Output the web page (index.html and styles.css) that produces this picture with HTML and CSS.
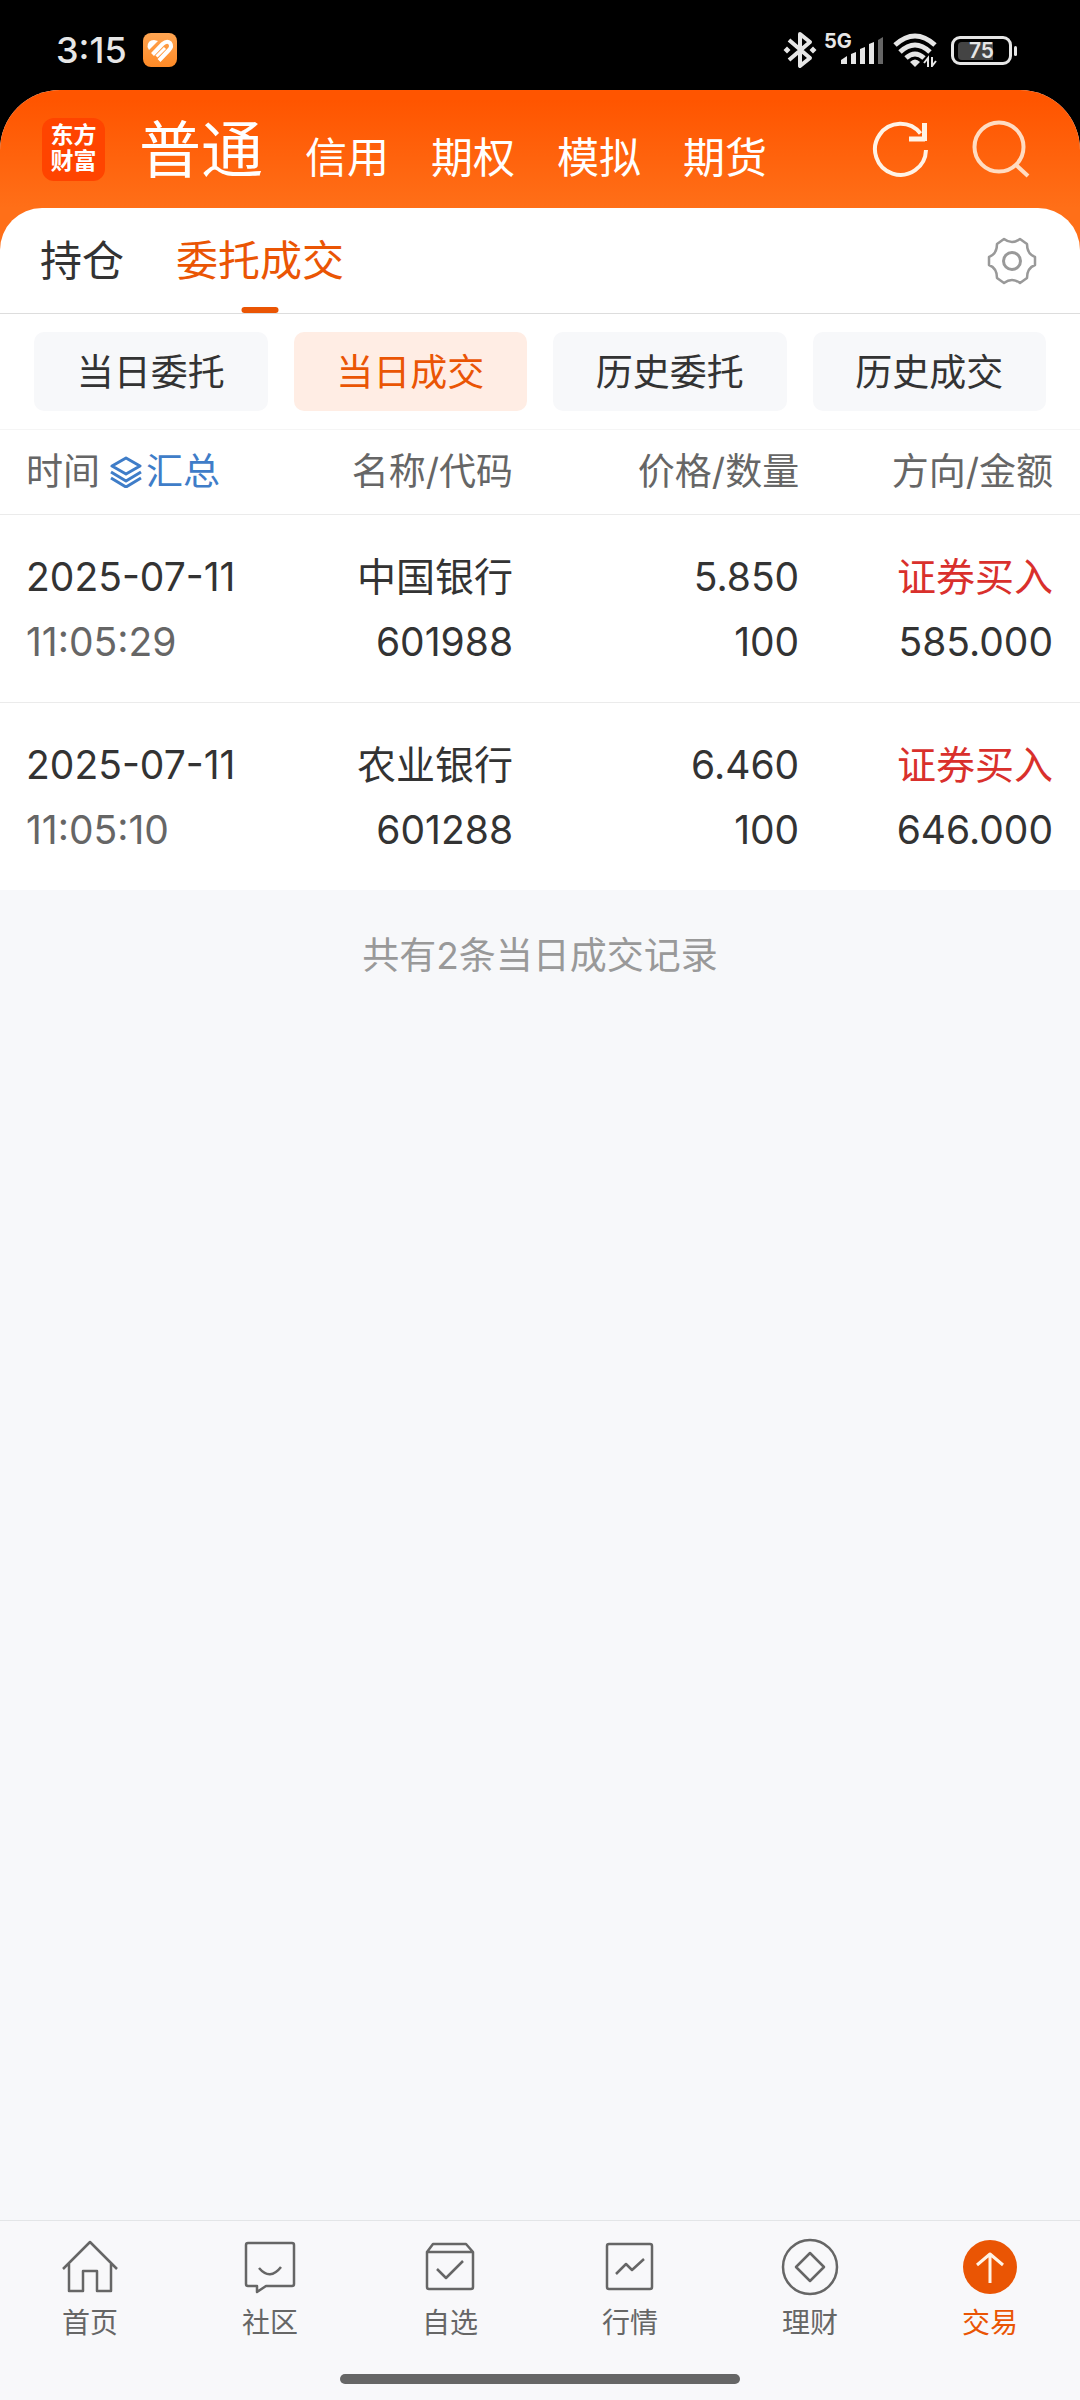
FILE: index.html
```html
<!DOCTYPE html>
<html lang="zh-CN">
<head>
    <meta charset="UTF-8">
    <meta name="viewport" content="width=device-width, initial-scale=1.0">
    <title>当日成交</title>
    <link rel="stylesheet" href="styles.css">
</head>
<body>
    <div class="status-bar">
        <span class="time">3:15</span>
        <svg class="app-badge" width="34" height="34" viewBox="0 0 34 34">
            <defs>
                <linearGradient id="badge" x1="0" y1="0" x2="0" y2="1">
                    <stop offset="0" stop-color="#ffa552"/>
                    <stop offset="1" stop-color="#ff8a26"/>
                </linearGradient>
            </defs>
            <rect width="34" height="34" rx="8" fill="url(#badge)"/>
            <path d="M4.500 14Q4.500 7 11 7L15 8L6 17Z" fill="#fff"/>
            <g fill="none" stroke="#fff" stroke-width="4">
                <path d="M9.500 21.500L19.500 11Q24 7 27 10Q29.500 13.500 26 17L16 27.500"/>
                <path d="M13.500 23.500L22 15" stroke-width="3"/>
            </g>
        </svg>
        <div class="status-icons">
            <svg width="34" height="38" viewBox="0 0 34 38">
                <path d="M6 9L27 27L17 35V3L27 11L6 29" fill="none" stroke="#e6e6e6" stroke-width="4" stroke-linejoin="round"/>
                <path d="M4 15.500L7.500 19L4 22.500L0.500 19ZM30 15.500L33.500 19L30 22.500L26.500 19Z" fill="#e6e6e6"/>
            </svg>
            <div class="signal">
                <span class="network">5G</span>
                <svg width="42" height="27" viewBox="0 0 42 27">
                    <g fill="#e6e6e6">
                        <path d="M0 27V23L6 19V27Z"/>
                        <path d="M10 27V17L15 15V27Z"/>
                        <path d="M19 27V12L24 10V27Z"/>
                        <path d="M28 27V7L33 5V27Z"/>
                    </g>
                    <path d="M37 27V3L42 0V27Z" fill="#666"/>
                </svg>
            </div>
            <svg width="44" height="34" viewBox="0 0 44 34">
                <g fill="none" stroke="#e6e6e6" stroke-width="5">
                    <path d="M2 12Q22 -6 42 12"/>
                    <path d="M7 19Q22 5 37 19"/>
                    <path d="M13 25Q22 17 31 25"/>
                </g>
                <path d="M17 29Q22 24 27 29L22 34Z" fill="#e6e6e6"/>
                <path d="M35 34V25L31 30M39 24V33L43 28" fill="none" stroke="#e6e6e6" stroke-width="2"/>
            </svg>
            <div class="battery"><span>75</span></div>
        </div>
    </div>

    <div class="top">
        <header class="header">
            <div class="logo">东方<br>财富</div>
            <nav class="accounts">
                <a class="active" href="#">普通</a>
                <a href="#">信用</a>
                <a href="#">期权</a>
                <a href="#">模拟</a>
                <a href="#">期货</a>
            </nav>
            <button class="icon-btn" type="button" aria-label="刷新">
                <svg width="58" height="58" viewBox="0 0 58 58" fill="none" stroke="#fff3e6" stroke-width="4">
                    <path d="M54 30A25.500 25.500 0 1 1 48.500 13.500"/>
                    <path d="M37 19H53M52.500 3V21" stroke-width="5"/>
                </svg>
            </button>
            <button class="icon-btn" type="button" aria-label="搜索">
                <svg width="58" height="58" viewBox="0 0 58 58" fill="none" stroke="#ffdcc2" stroke-width="4">
                    <circle cx="27" cy="27" r="24.500"/>
                    <path d="M43 44L56 56"/>
                </svg>
            </button>
        </header>

        <div class="tabs">
            <button class="tab" type="button">持仓</button>
            <button class="tab active" type="button">委托成交</button>
            <button class="icon-btn settings" type="button" aria-label="设置">
                <svg width="50" height="50" viewBox="0 0 50 50" fill="none" stroke="#999" stroke-width="2.500" stroke-linejoin="round">
                    <path d="M2 21Q10 18 10 8L17 3Q25 9 33 3L40 8Q40 18 48 21V29Q40 32 40 42L33 47Q25 41 17 47L10 42Q10 32 2 29Z"/>
                    <circle cx="25" cy="25" r="8.500" stroke-width="3"/>
                </svg>
            </button>
        </div>
    </div>

    <main class="content">
        <div class="filters">
            <button class="filter" type="button">当日委托</button>
            <button class="filter active" type="button">当日成交</button>
            <button class="filter" type="button">历史委托</button>
            <button class="filter" type="button">历史成交</button>
        </div>

        <table class="deals">
            <thead>
                <tr>
                    <th>
                        <div class="time-head">
                            时间
                            <button class="summary" type="button">
                                <svg width="32" height="32" viewBox="0 0 32 32" fill="none" stroke="#3f7dc8" stroke-width="3" stroke-linejoin="round">
                                    <path d="M16 2L30 10L16 18L2 10Z"/>
                                    <path d="M1 16L16 25L31 16"/>
                                    <path d="M1 22L16 31L31 22"/>
                                </svg>汇总
                            </button>
                        </div>
                    </th>
                    <th>名称/代码</th>
                    <th>价格/数量</th>
                    <th>方向/金额</th>
                </tr>
            </thead>
            <tbody>
                <tr>
                    <td><span>2025-07-11</span><span class="muted">11:05:29</span></td>
                    <td><span>中国银行</span><span>601988</span></td>
                    <td><span>5.850</span><span>100</span></td>
                    <td><span class="buy">证券买入</span><span>585.000</span></td>
                </tr>
                <tr>
                    <td><span>2025-07-11</span><span class="muted">11:05:10</span></td>
                    <td><span>农业银行</span><span>601288</span></td>
                    <td><span>6.460</span><span>100</span></td>
                    <td><span class="buy">证券买入</span><span>646.000</span></td>
                </tr>
            </tbody>
        </table>
    </main>

    <p class="total">共有2条当日成交记录</p>

    <footer class="bottom">
        <nav class="bottom-nav">
            <a href="#">
                <svg width="58" height="58" viewBox="0 0 58 58">
                    <path d="M2 31L29 4L56 31M8 26V53H22V33H36V53H50V26"/>
                </svg>
                首页
            </a>
            <a href="#">
                <svg width="58" height="58" viewBox="0 0 58 58">
                    <path d="M7 5H51Q53 5 53 7V46Q53 48 51 48H25L16 54V48H7Q5 48 5 46V7Q5 5 7 5Z"/>
                    <path d="M18 30Q29 43 40 29"/>
                </svg>
                社区
            </a>
            <a href="#">
                <svg width="58" height="58" viewBox="0 0 58 58">
                    <path d="M6 14L12 6H45L52 14V49Q52 51 50 51H8Q6 51 6 49ZM6 14H52"/>
                    <path d="M16 31L25 40L42 23"/>
                </svg>
                自选
            </a>
            <a href="#">
                <svg width="58" height="58" viewBox="0 0 58 58">
                    <rect x="6" y="6" width="45" height="45" rx="2"/>
                    <path d="M15 36L25 26L31 32L43 21"/>
                </svg>
                行情
            </a>
            <a href="#">
                <svg width="58" height="58" viewBox="0 0 58 58">
                    <circle cx="29" cy="29" r="27"/>
                    <path d="M29 15L43 29L29 43L15 29Z"/>
                </svg>
                理财
            </a>
            <a class="active" href="#">
                <svg width="58" height="58" viewBox="0 0 58 58">
                    <circle cx="29" cy="29" r="27" fill="#ea5504" stroke="none"/>
                    <path d="M29 45V16M16 27L29 16L42 27" stroke="#fff3e6" stroke-width="3"/>
                </svg>
                交易
            </a>
        </nav>
        <div class="home-bar"></div>
    </footer>
</body>
</html>
```
FILE: styles.css
```css
body {
    margin: 0;
    font-family: Inter, "Noto Sans CJK SC", sans-serif;
    background-color: #f7f8fa;
    color: #333;
    display: flex;
    flex-direction: column;
    min-height: 100vh;
}

button {
    margin: 0;
    padding: 0;
    border: none;
    background: none;
    font-family: inherit;
    color: inherit;
    cursor: pointer;
}

a {
    color: inherit;
    text-decoration: none;
}

svg {
    display: block;
}

/* status bar */
.status-bar {
    display: flex;
    align-items: center;
    height: 90px;
    padding: 10px 68px 0 56px;
    box-sizing: border-box;
    background-color: #000;
    color: #e6e6e6;
}

.time {
    font-size: 36px;
    font-weight: 500;
    line-height: 40px;
}

.app-badge {
    margin-left: 16px;
}

.status-icons {
    display: flex;
    align-items: center;
    gap: 10px;
    margin-left: auto;
}

.signal {
    position: relative;
    padding-left: 14px;
}

.network {
    position: absolute;
    left: -3px;
    top: -6px;
    font-size: 20px;
    font-weight: 700;
    line-height: 20px;
}

.battery {
    position: relative;
    width: 61px;
    height: 29px;
    margin-left: 4px;
    padding: 3px 4px;
    border: 3px solid #e6e6e6;
    border-radius: 9px;
    box-sizing: border-box;
}

.battery span {
    display: block;
    border-radius: 4px;
    background: linear-gradient(to right, #444 75%, transparent 75%);
    font-size: 21px;
    font-weight: 600;
    line-height: 18px;
    text-align: center;
}

.battery::after {
    content: "";
    position: absolute;
    right: -8px;
    top: 7px;
    width: 3px;
    height: 10px;
    border-radius: 2px;
    background-color: #e6e6e6;
}

/* orange header */
.top {
    background: linear-gradient(#ff5500 10px, #ff6f18 118px);
    border-radius: 60px 60px 0 0;
    box-shadow: 0 -60px 0 60px #000;
    clip-path: inset(0);
}

.header {
    display: flex;
    align-items: center;
    height: 118px;
    padding: 0 50px 0 42px;
}

.logo {
    width: 63px;
    height: 63px;
    padding-top: 4px;
    box-sizing: border-box;
    border-radius: 12px;
    background-color: #ff4400;
    color: #fff;
    font-size: 23px;
    font-weight: 700;
    line-height: 26px;
    text-align: center;
}

.accounts {
    display: flex;
    align-items: baseline;
    gap: 42px;
    margin: 0 auto 0 34px;
    padding-top: 10px;
    color: #fff;
    font-size: 42px;
    line-height: 62px;
}

.accounts .active {
    font-size: 62px;
}

.header .icon-btn + .icon-btn {
    margin-left: 42px;
}

.tabs {
    display: flex;
    align-items: center;
    gap: 52px;
    height: 105px;
    padding: 0 43px 0 40px;
    border-bottom: 1px solid #ddd;
    border-radius: 42px 42px 0 0;
    background-color: #fff;
}

.tab {
    position: relative;
    height: 105px;
    font-size: 42px;
    line-height: 60px;
}

.tab.active {
    color: #ea5504;
}

.tab.active::after {
    content: "";
    position: absolute;
    left: 50%;
    bottom: 0;
    width: 37px;
    height: 6px;
    border-radius: 3px;
    background-color: #ea5504;
    transform: translateX(-50%);
}

.settings {
    margin-left: auto;
}

/* filters and table */
.content {
    background-color: #fff;
}

.filters {
    display: grid;
    grid-template-columns: repeat(4, 1fr);
    gap: 26px;
    padding: 18px 34px;
    border-bottom: 1px solid #f5f5f5;
}

.filter {
    height: 79px;
    padding-bottom: 4px;
    border-radius: 10px;
    background-color: #f7f8fa;
    font-size: 37px;
}

.filter.active {
    background-color: #ffede4;
    color: #ea5504;
}

.deals {
    width: 100%;
    border-collapse: separate;
    border-spacing: 0;
    table-layout: fixed;
    font-size: 39px;
    text-align: right;
}

.deals th {
    height: 84px;
    padding: 0;
    border-bottom: 1px solid #ebebeb;
    color: #666;
    font-size: 37px;
    font-weight: 400;
    line-height: 60px;
    text-align: right;
}

.deals td {
    padding: 29px 0 28px;
    border-bottom: 1px solid #ebebeb;
}

.deals tr:last-child td {
    border-bottom: none;
}

.deals th:nth-child(1),
.deals th:nth-child(4) {
    width: 23.5%;
}

.deals th:nth-child(3) {
    width: 26.5%;
}

.deals thead th:first-child,
.deals td:first-child {
    padding-left: 26px;
    text-align: left;
}

.deals thead th:last-child,
.deals td:last-child {
    padding-right: 27px;
}

.deals td span {
    display: block;
    line-height: 65px;
}

.deals .muted {
    color: #666;
}

.deals .buy {
    color: #d9302c;
}

.time-head {
    display: flex;
    align-items: center;
    gap: 10px;
}

.summary {
    display: flex;
    align-items: center;
    gap: 4px;
    color: #3f7dc8;
    font-size: 37px;
    line-height: 60px;
}

.total {
    margin: 36px 0;
    color: #999;
    font-size: 37px;
    line-height: 60px;
    text-align: center;
}

/* bottom navigation */
.bottom {
    margin-top: auto;
    border-top: 1px solid #e3e5e7;
    background-color: #f8f8fa;
}

.bottom-nav {
    display: grid;
    grid-template-columns: repeat(6, 1fr);
    padding-top: 17px;
}

.bottom-nav a {
    display: flex;
    flex-direction: column;
    align-items: center;
    gap: 7px;
    color: #666;
    font-size: 28px;
    line-height: 40px;
}

.bottom-nav svg {
    fill: none;
    stroke: #666;
    stroke-width: 2.5;
    stroke-linejoin: round;
}

.bottom-nav .active {
    color: #ea5504;
}

.home-bar {
    width: 37%;
    height: 10px;
    margin: 31px auto 16px;
    border-radius: 5px;
    background-color: #666;
}
```
